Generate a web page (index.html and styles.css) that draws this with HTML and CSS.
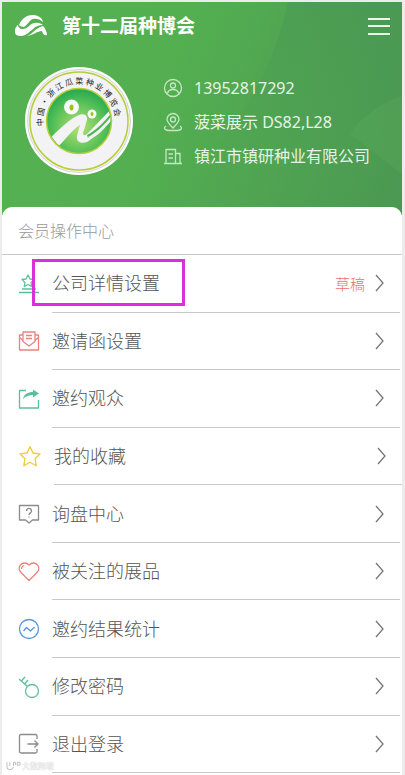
FILE: index.html
```html
<!DOCTYPE html>
<html lang="zh-CN">
<head>
<meta charset="utf-8">
<meta name="viewport" content="width=device-width, initial-scale=1">
<title>第十二届种博会</title>
<link rel="stylesheet" href="styles.css">
</head>
<body>
<div class="app">
  <header class="hero">
    <svg class="waves" viewBox="0 0 400 213" preserveAspectRatio="none" aria-hidden="true">
      <defs><linearGradient id="fade" x1="0" y1="0" x2="0" y2="1"><stop offset="0" stop-color="#458f56" stop-opacity=".35"/><stop offset="1" stop-color="#458f56" stop-opacity="0"/></linearGradient></defs>
      <path d="M286 0C276 48 250 110 200 160h200V0z" fill="url(#fade)"/>
      <path d="M400 94C380 100 358 116 348 132l52 40z" fill="#5cab5c" fill-opacity=".3"/>
    </svg>
    <div class="topbar">
      <svg class="logo" viewBox="0 0 32 22" aria-hidden="true">
        <path d="M4 10C7 3 12 0 18 0c6 0 10 4 10 7-3-3-7-4-10-3-4 1-5 6-9 8-2 0-4-1-5-2z"/>
        <path d="M3 10C0 12 0 15 0 17c0 3 3 4 6 4 5 0 8-4 12-7 3-3 6-4 10-4-4-3-9-3-13 0-3 3-5 4-8 4-2 0-4-2-4-4z"/>
        <path d="M12 21c6-2 8-8 16-10 2 2 4 6 4 9-3 1-4-1-5-4-5 0-8 4-15 5z"/>
      </svg>
      <h1 class="title">第十二届种博会</h1>
      <button class="menu" type="button" aria-label="菜单"><span></span><span></span><span></span></button>
    </div>
    <div class="profile">
      <svg class="emblem" viewBox="0 0 108 108" role="img" aria-label="中国·浙江瓜菜种业博览会">
        <defs>
          <radialGradient id="disc" cx=".5" cy=".6" r=".6"><stop offset="0" stop-color="#b6e07a"/><stop offset=".5" stop-color="#6cc95c"/><stop offset="1" stop-color="#23a94f"/></radialGradient>
          <clipPath id="inner"><circle cx="54" cy="54" r="31.500"/></clipPath>
          <path id="ring" d="M18.500 59A36 36 0 1 1 89.500 59"/>
        </defs>
        <circle cx="54" cy="54" r="54" fill="#fff"/>
        <circle cx="54" cy="54" r="51.500" fill="#f3f3f5" stroke="#d5d5d5"/>
        <circle cx="54" cy="54" r="49" fill="none" stroke="#b4cf35" stroke-width="1.500"/>
        <circle cx="54" cy="54" r="32.500" fill="url(#disc)" stroke="#b4cf35" stroke-width="1.500"/>
        <g clip-path="url(#inner)" fill="#f3f3f5">
          <path d="M24 72C33 64 43 53 52 49c5-3 11-2 10 4L58 66c0 3 2 3 5 0L90 38v9C79 60 70 70 62 75c-6 2-11 0-10-6l3-11C48 62 39 74 31 82z"/>
          <path d="M62 68C71 64 80 54 90 42v5C79 58 72 67 63 71z" fill="#4cb64f"/>
          <path d="M63 70c8-4 16-11 25-23l1 4c-9 9-15 18-24 21z"/>
        </g>
        <circle cx="46.500" cy="40" r="7.500" fill="#f8f8f8"/><ellipse cx="46.500" cy="40.500" rx="2" ry="3" fill="#9cc31c"/>
        <circle cx="67" cy="47" r="4.500" fill="#f8f8f8"/><ellipse cx="67" cy="47" rx="1.500" ry="2" fill="#9cc31c"/>
        <text class="emblem-text"><textPath href="#ring">中 国 · 浙 江 瓜 菜 种 业 博 览 会</textPath></text>
      </svg>
      <ul class="facts">
        <li><svg class="fact-icon" viewBox="0 0 20 20"><circle cx="10" cy="10" r="8.500"/><circle cx="10" cy="7.500" r="2.500"/><path d="M4.500 15.500C5 12 7 11.500 10 11.500s5 .5 5.500 4"/></svg>13952817292</li>
        <li><svg class="fact-icon" viewBox="0 0 20 20"><path d="M10 16C6 12 4 10 4 7.500a6 6 0 0 1 12 0C16 10 14 12 10 16z"/><circle cx="10" cy="7.500" r="2.500"/><path d="M3 14c-4 3 1 4.500 3 4.500h8c2 0 7-1.500 3-4.500"/></svg>菠菜展示 DS82,L28</li>
        <li><svg class="fact-icon" viewBox="0 0 20 20"><path d="M1 17.500h18M3 17V3.500h9.500V17M13 7.500h4V17M5.500 8H10M5.500 12H10"/></svg>镇江市镇研种业有限公司</li>
      </ul>
    </div>
  </header>
  <main class="panel">
    <h2 class="panel-title">会员操作中心</h2>
    <nav class="list">
      <a class="row marked" href="#"><svg class="icon teal" viewBox="0 0 22 22"><path d="m10 2 2 4 4 .5-3 3 .7 4L10 11.500 6.300 13.500 7 9.500l-3-3L8 6zM4 16h14M1 19.500h20"/></svg><span class="cell"><span class="label">公司详情设置</span><span class="status">草稿</span><svg class="arrow" viewBox="0 0 10 18"><path d="m1 1 7 8-7 8"/></svg></span></a>
      <a class="row" href="#"><svg class="icon coral" viewBox="0 0 22 22"><path d="M5 5H1.500v15h19V5H17M1.500 7.500 5 10.500M20.500 7.500 17 10.500M5 11.500V2h12v9.500l-6 4.500zM8 5.500h6M8 8.500h6"/></svg><span class="cell"><span class="label">邀请函设置</span><svg class="arrow" viewBox="0 0 10 18"><path d="m1 1 7 8-7 8"/></svg></span></a>
      <a class="row" href="#"><svg class="icon teal" viewBox="0 0 22 22"><path d="M8 2.500H1.500v17.500h19V12"/><path class="solid" d="M5 11C6 6 10 4 15 4V1.500l6 4-6 4V7c-4 0-7 1-10 4z"/></svg><span class="cell"><span class="label">邀约观众</span><svg class="arrow" viewBox="0 0 10 18"><path d="m1 1 7 8-7 8"/></svg></span></a>
      <a class="row favorite" href="#"><svg class="icon gold" viewBox="0 0 22 22"><path d="m11 1.500 3 6.500 7 .8-5 4.900 1.200 7L11 17.300l-6.200 3.400 1.200-7L1 8.800 8 8z"/></svg><span class="cell"><span class="label">我的收藏</span><svg class="arrow" viewBox="0 0 10 18"><path d="m1 1 7 8-7 8"/></svg></span></a>
      <a class="row" href="#"><svg class="icon gray" viewBox="0 0 22 22"><path d="M1.500 2.500h19v14.500h-6L11 20l-3.500-3h-6zM8.500 8c0-3.500 5-3.500 5 0 0 2-2.500 1.800-2.500 4M11 13.500v1"/></svg><span class="cell"><span class="label">询盘中心</span><svg class="arrow" viewBox="0 0 10 18"><path d="m1 1 7 8-7 8"/></svg></span></a>
      <a class="row" href="#"><svg class="icon coral" viewBox="0 0 22 22"><path d="M11 4C8 1 4 1.500 2 4.500c-2 4 0 6 2 8l7 7 7-7c2-2 4-4 2-8-2-3-6-3.500-9-.5zM3.500 8C3.500 6 4.500 5 6 4.500"/></svg><span class="cell"><span class="label">被关注的展品</span><svg class="arrow" viewBox="0 0 10 18"><path d="m1 1 7 8-7 8"/></svg></span></a>
      <a class="row" href="#"><svg class="icon blue" viewBox="0 0 22 22"><circle cx="11" cy="11" r="9.500"/><path d="m5.500 13 3-3.500 4 3.500 4-4"/></svg><span class="cell"><span class="label">邀约结果统计</span><svg class="arrow" viewBox="0 0 10 18"><path d="m1 1 7 8-7 8"/></svg></span></a>
      <a class="row" href="#"><svg class="icon teal" viewBox="0 0 22 22"><circle cx="14" cy="15" r="6.500"/><path d="M9.500 10.500 1 3M3.500 5 7 1M6.500 8 10 4"/></svg><span class="cell"><span class="label">修改密码</span><svg class="arrow" viewBox="0 0 10 18"><path d="m1 1 7 8-7 8"/></svg></span></a>
      <a class="row" href="#"><svg class="icon gray" viewBox="0 0 22 22"><path d="M19 6V3q0-1.500-1.500-1.500H3Q1.500 1.500 1.500 3v15.500q0 1.500 1.500 1.500h14.500q1.500 0 1.500-1.500V16M9.500 11H20M16.500 7.500 20 11l-3.500 3.500"/></svg><span class="cell"><span class="label">退出登录</span><svg class="arrow" viewBox="0 0 10 18"><path d="m1 1 7 8-7 8"/></svg></span></a>
    </nav>
  </main>
  <div class="watermark"><svg viewBox="0 0 16 10" aria-hidden="true"><path d="M1 1v5q0 3 3 3t4-3M4 1v4M8 5V1h2v3M12 1h3v3h-3z"/></svg>大数跨境</div>
</div>
</body>
</html>
```

FILE: styles.css
```css
*, *::after { box-sizing: border-box; }

body {
  margin: 0;
  background: #ececec;
  font-family: "Noto Sans", "Noto Sans CJK SC", sans-serif;
}

.app {
  position: relative;
  display: flex;
  flex-direction: column;
  min-height: 100vh;
  margin: 0 3px 0 2px;
  padding: 2px 0;
  background: linear-gradient(#ececec 2px, #fff 2px);
}

.hero {
  position: relative;
  height: 213px;
  padding: 0 12px;
  color: #e6f4e6;
  background: linear-gradient(110deg, #55b150 0%, #53af50 40%, #4e9f52 80%, #4b9852 100%);
}
.waves { position: absolute; inset: 0; width: 100%; height: 100%; }

.topbar { position: relative; display: flex; align-items: center; height: 48px; }
.logo { width: 32px; height: 22px; margin: 0 15px 0 1px; fill: #fff; }
.title {
  flex: 1;
  margin: 0;
  color: #fff;
  font-size: 19px;
  line-height: 28px;
}

.menu {
  display: flex;
  flex-direction: column;
  justify-content: space-between;
  width: 22px;
  height: 17px;
  padding: 0;
  border: 0;
  background: none;
}
.menu span { width: 100%; height: 2px; background: #e9f6e9; }

.profile { position: relative; display: flex; gap: 30px; padding: 17px 0 0 11px; }
.emblem { width: 108px; height: 108px; flex: none; }
.emblem-text { font-family: "Noto Sans CJK SC", sans-serif; font-size: 8px; fill: #222; }
.facts { margin: 4px 0 0; padding: 0; list-style: none; font-size: 16px; line-height: 34px; white-space: nowrap; }
.facts li { display: flex; align-items: center; gap: 11px; height: 34px; }
.fact-icon { width: 20px; height: 20px; fill: none; stroke: #c5e6c5; stroke-width: 1.3px; }

.panel {
  position: relative;
  display: flex;
  flex: 1;
  flex-direction: column;
  margin-top: -8px;
  border-radius: 10px 10px 0 0;
  background: #fff;
}
.panel-title {
  height: 48px;
  margin: 0;
  padding-left: 16px;
  border-bottom: 1px solid #c9c9c9;
  color: #999;
  font-size: 16px;
  font-weight: 300;
  line-height: 48px;
}

.list { display: flex; flex: 1; flex-direction: column; }
.row {
  position: relative;
  display: flex;
  flex: 1 0 57px;
  align-items: center;
  gap: 12px;
  padding: 0 2px 0 16px;
  color: #555;
  text-decoration: none;
}
.favorite { padding: 0 0 0 17px; gap: 13px; }
.cell {
  display: flex;
  flex: 1;
  align-items: center;
  align-self: stretch;
  border-bottom: 1px solid #c9c9c9;
}
.label { flex: 1; font-size: 18px; font-weight: 300; line-height: 26px; }
.status { margin-right: 10px; color: #ee6e68; font-size: 15px; font-weight: 300; }
.arrow { width: 10px; height: 18px; margin-right: 15px; fill: none; stroke: #777; stroke-width: 1.3px; }

.icon { width: 22px; height: 22px; flex: none; fill: none; stroke: currentColor; stroke-width: 1.3px; stroke-linejoin: round; }
.solid { fill: currentColor; stroke: none; }
.teal { color: #5cbf9b; }
.coral { color: #ec827b; }
.gold { color: #f2cb3a; }
.gray { color: #8b8b8b; }
.blue { color: #5795dd; }

.marked::after {
  content: "";
  position: absolute;
  top: 4px;
  left: 30px;
  width: 153px;
  height: 47px;
  border: 3px solid #dc2fdc;
}

.watermark {
  position: absolute;
  bottom: 3px;
  left: 4px;
  display: flex;
  align-items: center;
  gap: 1px;
  color: #fff;
  font-size: 8px;
  line-height: 12px;
  text-shadow: 0 0 1px #999;
}
.watermark svg { width: 15px; height: 10px; fill: none; stroke: #bbb; }
```
